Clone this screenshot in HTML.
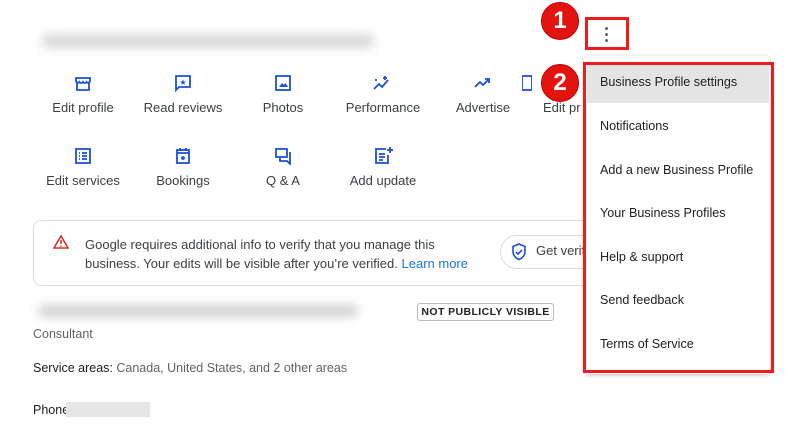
<!DOCTYPE html>
<html><head><meta charset="utf-8"><style>
*{margin:0;padding:0;box-sizing:border-box}
body{width:800px;height:429px;background:#fff;font-family:"Liberation Sans",Arial,sans-serif;color:#3c4043;position:relative;overflow:hidden}
.a{position:absolute}
.blur{position:absolute;background:#d8d8d8;filter:blur(5px);border-radius:6px}
.lab{position:absolute;font-size:13px;color:#3c4043;text-align:center;width:100px}
.ic{position:absolute}
.mi{position:absolute;left:600px;font-size:12.6px;color:#202124}
</style></head><body>
<div class="blur" style="left:42px;top:34px;width:332px;height:14px"></div>

<svg class="ic" style="left:74px;top:74px" width="18" height="18" viewBox="0 0 18 18" fill="none" stroke="#1a4fd8" stroke-width="1.8"><path d="M2 4h14v3a2 2 0 0 1-3.5 1 2 2 0 0 1-3.5 0 2 2 0 0 1-3.5 0A2 2 0 0 1 2 7z"/><path d="M3 9v7h12V9"/></svg>
<svg class="ic" style="left:174px;top:74px" width="18" height="18" viewBox="0 0 18 18"><path d="M2 2h14v11H5l-3 3z" fill="none" stroke="#1a4fd8" stroke-width="1.8"/><text x="9" y="11" font-size="8" fill="#1a4fd8" text-anchor="middle">★</text></svg>
<svg class="ic" style="left:274px;top:74px" width="18" height="18" viewBox="0 0 18 18"><rect x="2" y="2" width="14" height="14" fill="none" stroke="#1a4fd8" stroke-width="1.8"/><path d="M5 13l3-4 2 2 1.5-2 2.5 4z" fill="#1a4fd8"/></svg>
<svg class="ic" style="left:372px;top:74px" width="20" height="18" viewBox="0 0 20 18" fill="none" stroke="#1a4fd8" stroke-width="1.8"><path d="M2 15l5-5 3 3 6-7"/><path d="M13 2v4M11 4h4M3 6h2"/></svg>
<svg class="ic" style="left:473px;top:74px" width="20" height="18" viewBox="0 0 20 18" fill="none" stroke="#1a4fd8" stroke-width="1.8"><path d="M2 13l5-5 3 3 6-6M12 5h4v4"/></svg>
<svg class="ic" style="left:522px;top:74px" width="10" height="18"><rect x="0" y="2" width="10" height="14" fill="none" stroke="#1a4fd8" stroke-width="1.8"/></svg>
<div class="lab" style="left:33px;top:100px">Edit profile</div>
<div class="lab" style="left:133px;top:100px">Read reviews</div>
<div class="lab" style="left:233px;top:100px">Photos</div>
<div class="lab" style="left:333px;top:100px">Performance</div>
<div class="lab" style="left:433px;top:100px">Advertise</div>
<div class="a" style="left:543px;top:100px;font-size:13px">Edit pr</div>

<svg class="ic" style="left:74px;top:147px" width="18" height="18" viewBox="0 0 18 18" fill="none" stroke="#1a4fd8" stroke-width="1.8"><rect x="2" y="2" width="14" height="14"/><path d="M5 6h1M8 6h5M5 9h1M8 9h5M5 12h1M8 12h5"/></svg>
<svg class="ic" style="left:174px;top:147px" width="18" height="18" viewBox="0 0 18 18" fill="none" stroke="#1a4fd8" stroke-width="1.8"><rect x="3" y="3" width="12" height="13"/><path d="M3 6h12M6 1v3M12 1v3"/><circle cx="9" cy="11" r="1" fill="#1a4fd8"/></svg>
<svg class="ic" style="left:274px;top:147px" width="20" height="18" viewBox="0 0 20 18" fill="none" stroke="#1a4fd8" stroke-width="1.8"><path d="M2 2h11v8H2z"/><path d="M16 5v12l-3-3H6v-3"/></svg>
<svg class="ic" style="left:374px;top:146px" width="20" height="19" viewBox="0 0 20 19" fill="none" stroke="#1a4fd8" stroke-width="1.8"><path d="M12 3H2v14h12V9"/><path d="M5 8h6M5 11h6M5 14h4M16 1v6M13 4h6"/></svg>
<div class="lab" style="left:33px;top:173px">Edit services</div>
<div class="lab" style="left:133px;top:173px">Bookings</div>
<div class="lab" style="left:233px;top:173px">Q &amp; A</div>
<div class="lab" style="left:333px;top:173px">Add update</div>

<div class="a" style="left:33px;top:220px;width:560px;height:66px;border:1px solid #dadce0;border-radius:8px"></div>
<svg class="ic" style="left:53px;top:235px" width="16" height="14" viewBox="0 0 16 14"><path d="M8 1L15 13H1z" fill="none" stroke="#d93025" stroke-width="1.6"/><path d="M8 5v4M8 10.5v1.2" stroke="#d93025" stroke-width="1.5"/></svg>
<div class="a" style="left:85px;top:235px;font-size:13px;line-height:19px;color:#3c4043">Google requires additional info to verify that you manage this<br>business. Your edits will be visible after you’re verified. <span style="color:#1a73e8">Learn more</span></div>
<div class="a" style="left:500px;top:235px;width:120px;height:34px;border:1px solid #dadce0;border-radius:17px"></div>
<svg class="ic" style="left:511px;top:243px" width="16" height="18" viewBox="0 0 16 18" fill="none" stroke="#1a4fd8" stroke-width="1.6"><path d="M8 1l6 2.5v5c0 4-3 7-6 8-3-1-6-4-6-8v-5z"/><path d="M5 9l2 2 4-4"/></svg>
<div class="a" style="left:536px;top:243px;font-size:13px">Get verif</div>

<div class="blur" style="left:38px;top:305px;width:320px;height:12px;background:#d0d0d0"></div>
<div class="a" style="left:417px;top:303px;width:137px;height:18px;border:1px solid #bbb;border-radius:3px;font-size:10.5px;font-weight:bold;letter-spacing:.4px;text-align:center;line-height:16px;color:#202124">NOT PUBLICLY VISIBLE</div>
<div class="a" style="left:33px;top:327px;font-size:12.5px;color:#5f6368">Consultant</div>
<div class="a" style="left:33px;top:361px;font-size:12.5px;color:#202124">Service areas: <span style="color:#5f6368">Canada, United States, and 2 other areas</span></div>
<div class="a" style="left:33px;top:403px;font-size:12.5px;color:#202124">Phone</div>
<div class="a" style="left:66px;top:402px;width:84px;height:15px;background:#e6e6e6"></div>

<div class="a" style="left:584px;top:56px;width:186px;height:318px;background:#fff;box-shadow:0 1px 4px rgba(0,0,0,.25);border-radius:4px"></div>
<div class="a" style="left:587px;top:65px;width:182px;height:38px;background:#e4e4e4"></div>
<div class="mi" style="top:75px">Business Profile settings</div>
<div class="mi" style="top:119px">Notifications</div>
<div class="mi" style="top:163px">Add a new Business Profile</div>
<div class="mi" style="top:206px">Your Business Profiles</div>
<div class="mi" style="top:250px">Help &amp; support</div>
<div class="mi" style="top:293px">Send feedback</div>
<div class="mi" style="top:337px">Terms of Service</div>
<div class="a" style="left:583px;top:62px;width:191px;height:311px;border:3px solid #ee1c1c"></div>

<div class="a" style="left:585px;top:17px;width:44px;height:33px;border:3px solid #ee1c1c"></div>
<div class="a" style="left:605px;top:27px;width:3px;height:3px;border-radius:50%;background:#5f6368"></div>
<div class="a" style="left:605px;top:33px;width:3px;height:3px;border-radius:50%;background:#5f6368"></div>
<div class="a" style="left:605px;top:39px;width:3px;height:3px;border-radius:50%;background:#5f6368"></div>

<div class="a" style="left:541px;top:2px;width:38px;height:38px;border-radius:50%;background:#e3140f;border:1px solid #b00;color:#fff;font-weight:bold;font-size:24px;text-align:center;line-height:36px">1</div>
<div class="a" style="left:541px;top:64px;width:38px;height:38px;border-radius:50%;background:#e3140f;border:1px solid #b00;color:#fff;font-weight:bold;font-size:24px;text-align:center;line-height:36px">2</div>
</body></html>
